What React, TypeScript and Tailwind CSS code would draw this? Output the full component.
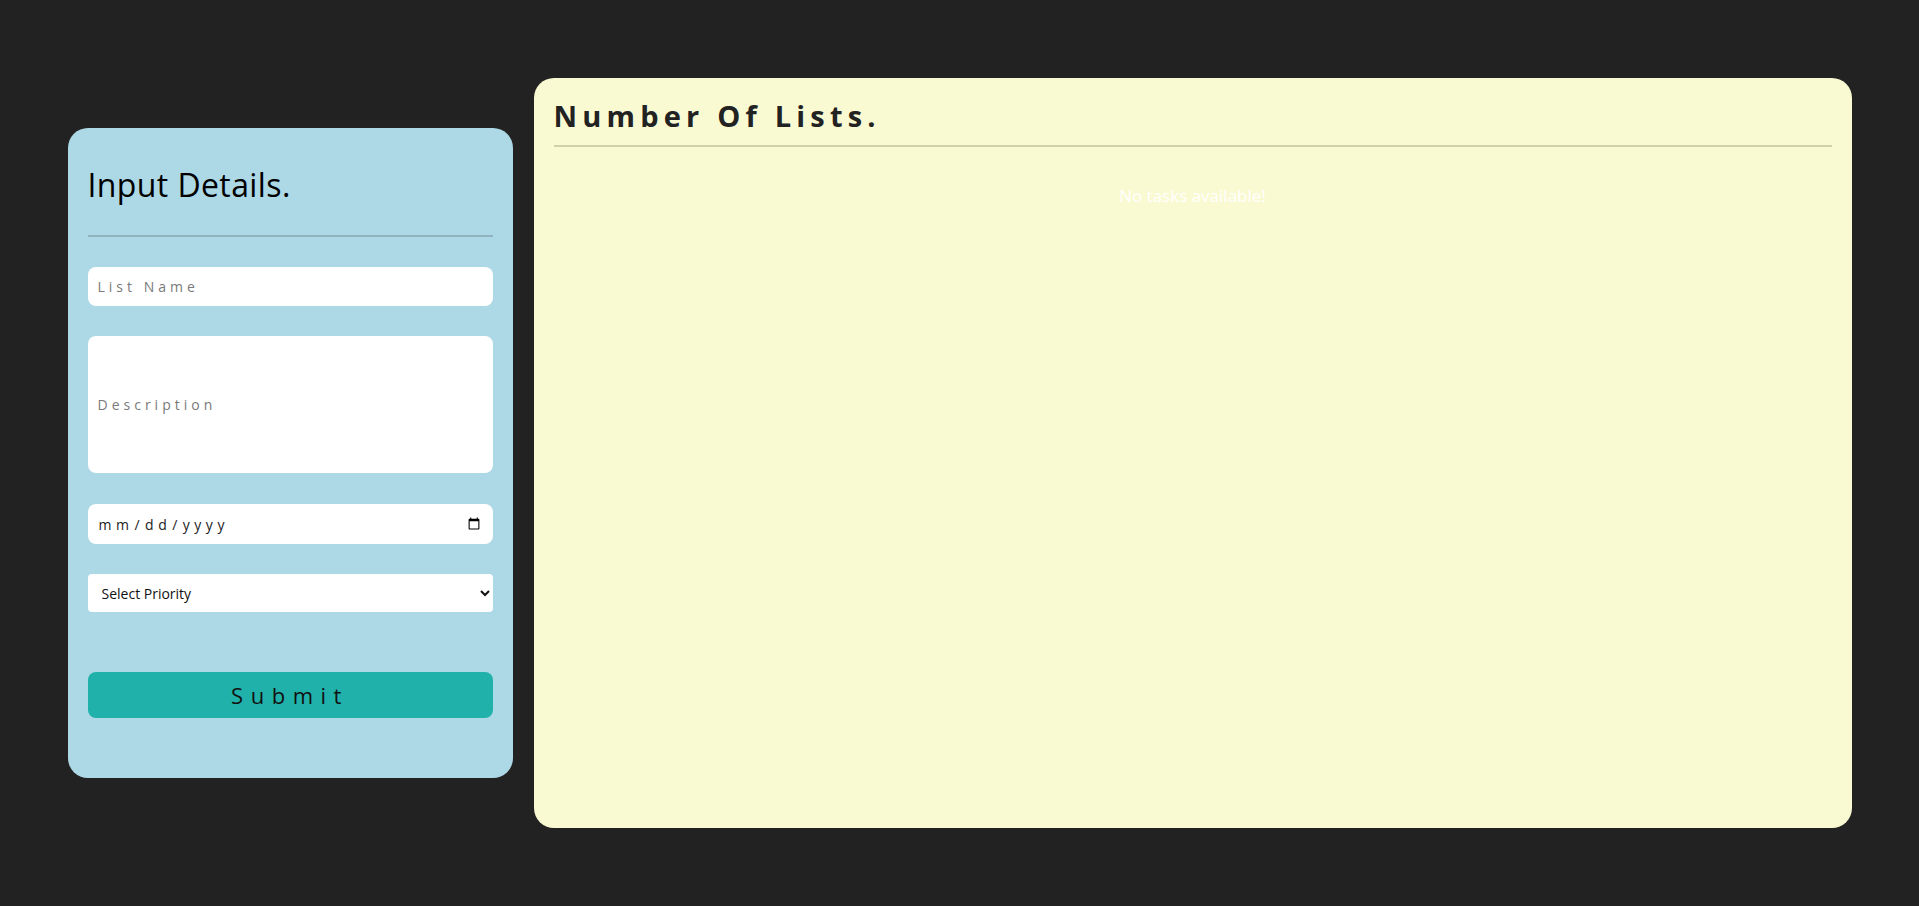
import React from "react";

export default function App() {
  const font = { fontFamily: '"Open Sans", "Liberation Sans", sans-serif' };
  return (
    <div
      className="w-full h-screen bg-[#222222] flex items-center justify-center gap-[21px] overflow-hidden"
      style={font}
    >
      <div className="w-[445px] h-[650px] bg-[#add8e6] rounded-[20px] px-[20px] pt-[37px] flex flex-col shrink-0">
        <h2 className="text-[32px] leading-[40px] tracking-[0.4px] text-black font-normal">Input Details.</h2>
        <div className="mt-[30px] h-[2px] bg-[#91b2bf]" />
        <input
          type="text"
          placeholder="List Name"
          className="mt-[30px] h-[39px] w-full bg-white rounded-[8px] pl-[10px] text-[14px] tracking-[4px] text-[#333] placeholder:text-[#7a7a7a] outline-none border-0"
        />
        <input
          type="text"
          placeholder="Description"
          className="mt-[30px] h-[137px] w-full bg-white rounded-[8px] pl-[10px] text-[14px] tracking-[4px] text-[#333] placeholder:text-[#7a7a7a] outline-none border-0"
        />
        <input
          type="date"
          className="mt-[31px] h-[40px] w-full bg-white rounded-[8px] pl-[10px] pr-[10px] text-[14px] tracking-[4.5px] text-[#222] outline-none border-0"
        />
        <select
          className="mt-[30px] h-[38px] w-full bg-white rounded-[4px] pl-[10px] pr-[4px] text-[14px] text-[#111] outline-none border-0"
          defaultValue=""
        >
          <option value="">Select Priority</option>
          <option value="high">High</option>
          <option value="medium">Medium</option>
          <option value="low">Low</option>
        </select>
        <button className="mt-[60px] h-[46px] w-full bg-[#20b2aa] rounded-[8px] text-[22px] tracking-[7.5px] text-[#111]">
          Submit
        </button>
      </div>

      <div className="w-[1318px] h-[750px] bg-[#fafad2] rounded-[20px] px-[20px] pt-[20px] flex flex-col shrink-0">
        <h2 className="text-[29px] leading-[36px] font-bold tracking-[5.2px] text-[#222]">Number Of Lists.</h2>
        <div className="mt-[11px] h-[2px] bg-[#cfcfa8]" />
        <p className="mt-[37px] text-center text-[17px] leading-[24px] text-white">No tasks available!</p>
      </div>
    </div>
  );
}
